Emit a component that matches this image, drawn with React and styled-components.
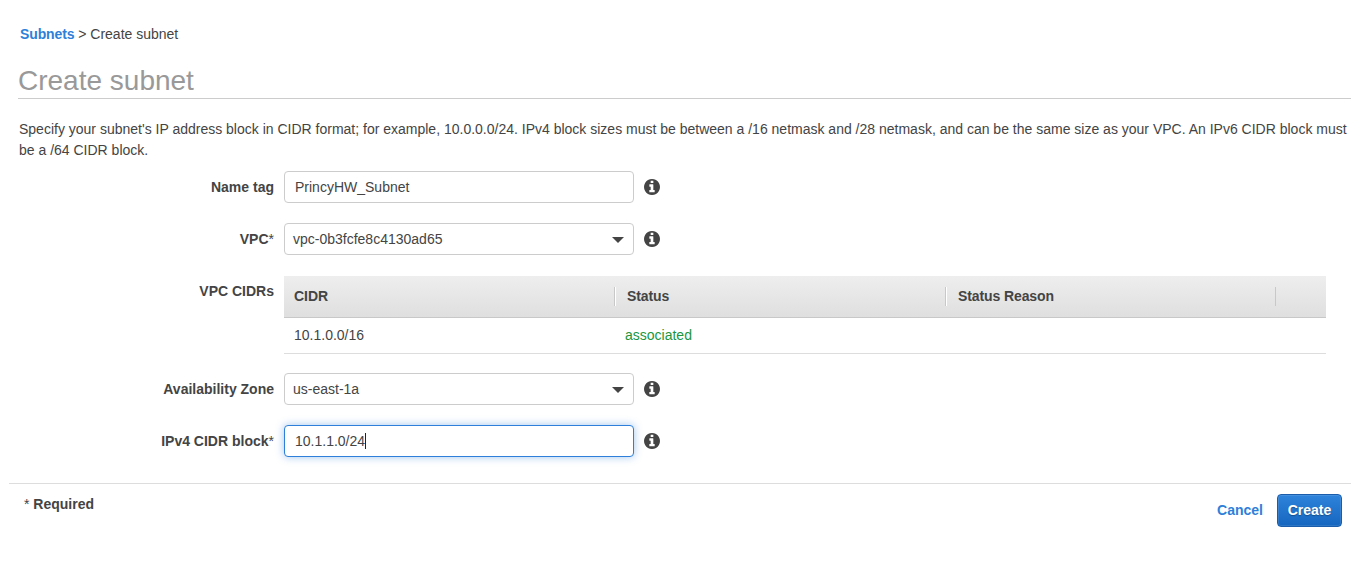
import React from "react";
import styled, { createGlobalStyle, css } from "styled-components";

const GlobalStyle = createGlobalStyle`
  *, *::before, *::after { box-sizing: border-box; }
  body {
    margin: 0;
    background: #fff;
    color: #444;
    font: 14px/20px "Liberation Sans", Arial, Helvetica, sans-serif;
  }
`;

const Page = styled.main`
  display: flex;
  flex-direction: column;
  height: 572px;
  padding: 24px 5px 0 9px;
`;

const Breadcrumb = styled.nav`
  padding-left: 11px;
  height: 20px;
`;

const Link = styled.a`
  color: #2e7fd9;
  font-weight: bold;
  letter-spacing: ${(p) => (p.$tight ? "-0.13px" : "normal")};
  text-decoration: none;
  cursor: pointer;
`;

const Title = styled.h1`
  margin: 20px 0 0 9px;
  height: 35px;
  border-bottom: 1px solid #ccc;
  color: #999;
  font-size: 28px;
  font-weight: normal;
  line-height: 33px;
`;

const Description = styled.p`
  margin: 20px 0 0 10px;
  line-height: 21px;
`;

const Form = styled.form`
  display: flex;
  flex-direction: column;
  gap: 20px;
  margin-top: 10px;
`;

const Row = styled.div`
  display: flex;
  align-items: flex-start;
`;

const ZoneRow = styled(Row)`
  margin-top: -1px;
`;

const Label = styled.label`
  width: 265px;
  margin-right: 10px;
  padding-top: 6px;
  font-weight: bold;
  text-align: right;
`;

const Mark = styled.span`
  font-weight: normal;
`;

const Field = styled.div`
  display: flex;
  align-items: center;
  width: 350px;
  height: 32px;
  padding: 0 10px;
  border: 1px solid #ccc;
  border-radius: 4px;
  background: #fff;
  ${(p) =>
    p.$focused &&
    css`
      border-color: #2e7fd9;
      box-shadow: 0 0 8px rgba(46, 127, 217, 0.45);
    `}
`;

const Select = styled(Field)`
  justify-content: space-between;
  padding: 0 9px 0 8px;
`;

const Arrow = styled.span`
  margin-top: 2px;
  border: 6px solid transparent;
  border-top-color: #444;
  border-bottom: 0;
`;

const Caret = styled.span`
  width: 1px;
  height: 16px;
  background: #222;
`;

const InfoIcon = styled.svg`
  flex: none;
  width: 16px;
  height: 16px;
  margin: 8px 0 0 10px;
  fill: #444;
`;

const Table = styled.div`
  width: 1042px;
  margin-top: 1px;
`;

const TableRow = styled.div`
  display: grid;
  grid-template-columns: 331px 331px 330px 50px;
  align-items: center;
  height: 36px;
  padding-bottom: 1px;
  border-bottom: 1px solid #ddd;
`;

const TableHead = styled(TableRow)`
  height: 42px;
  padding-bottom: 0;
  border-bottom-color: #c8c8c8;
  background: linear-gradient(#eee, #dfdfdf);
  font-weight: bold;
`;

const HeadCell = styled.div`
  height: 19px;
  padding-left: ${(p) => (p.$first ? 10 : 11)}px;
  border-right: ${(p) => (p.$last ? "0" : "1px solid #c8c8c8")};
  border-left: ${(p) => (p.$first || p.$last ? "0" : "1px solid #fff")};
  letter-spacing: ${(p) => (p.$first ? "normal" : "-0.1px")};
  line-height: 19px;
`;

const Cell = styled.div`
  height: 20px;
  margin-top: -1px;
  padding-left: 10px;
  color: ${(p) => (p.$ok ? "#1a9641" : "inherit")};
`;

const Footer = styled.footer`
  display: flex;
  justify-content: space-between;
  margin-top: 26px;
  padding: 10px 9px 0 15px;
  border-top: 1px solid #ddd;
`;

const Required = styled.strong`
  height: 20px;
`;

const Actions = styled.div`
  display: flex;
  align-items: flex-start;
  gap: 14px;
  line-height: 32px;
`;

const CreateButton = styled.button`
  width: 65px;
  height: 33px;
  padding: 0 0 1px;
  border: 1px solid #1b5dab;
  border-radius: 4px;
  background: linear-gradient(#2f83db, #1566be);
  box-shadow: inset 0 0 0 1px rgba(255, 255, 255, 0.1);
  color: #fff;
  font: bold 14px/20px "Liberation Sans", Arial, sans-serif;
  text-shadow: 0 1px 1px rgba(0, 0, 0, 0.3);
`;

function Info() {
  return (
    <InfoIcon viewBox="0 128 1536 1536" aria-hidden="true">
      <path d="M1024 1376v-160q0-14-9-23t-23-9h-96v-512q0-14-9-23t-23-9h-320q-14 0-23 9t-9 23v160q0 14 9 23t23 9h96v320h-96q-14 0-23 9t-9 23v160q0 14 9 23t23 9h448q14 0 23-9t9-23zm-128-896v-160q0-14-9-23t-23-9h-192q-14 0-23 9t-9 23v160q0 14 9 23t23 9h192q14 0 23-9t9-23zm640 416q0 209-103 385.5t-279.5 279.5-385.5 103-385.5-103-279.5-279.5-103-385.5 103-385.5 279.5-279.5 385.5-103 385.5 103 279.5 279.5 103 385.5z" />
    </InfoIcon>
  );
}

export default function App() {
  return (
    <>
      <GlobalStyle />
      <Page>
        <Breadcrumb>
          <Link $tight>Subnets</Link> &gt; Create subnet
        </Breadcrumb>
        <Title>Create subnet</Title>
        <Description>
          Specify your subnet's IP address block in CIDR format; for example, 10.0.0.0/24. IPv4 block
          sizes must be between a /16 netmask and /28 netmask, and can be the same size as your VPC. An
          IPv6 CIDR block must be a /64 CIDR block.
        </Description>
        <Form>
          <Row>
            <Label>Name tag</Label>
            <Field>PrincyHW_Subnet</Field>
            <Info />
          </Row>
          <Row>
            <Label>VPC<Mark>*</Mark></Label>
            <Select>vpc-0b3fcfe8c4130ad65<Arrow /></Select>
            <Info />
          </Row>
          <Row>
            <Label>VPC CIDRs</Label>
            <Table>
              <TableHead>
                <HeadCell $first>CIDR</HeadCell>
                <HeadCell>Status</HeadCell>
                <HeadCell>Status Reason</HeadCell>
                <HeadCell $last />
              </TableHead>
              <TableRow>
                <Cell>10.1.0.0/16</Cell>
                <Cell $ok>associated</Cell>
              </TableRow>
            </Table>
          </Row>
          <ZoneRow>
            <Label>Availability Zone</Label>
            <Select>us-east-1a<Arrow /></Select>
            <Info />
          </ZoneRow>
          <Row>
            <Label>IPv4 CIDR block<Mark>*</Mark></Label>
            <Field $focused>10.1.1.0/24<Caret /></Field>
            <Info />
          </Row>
        </Form>
        <Footer>
          <Required><Mark>*</Mark> Required</Required>
          <Actions>
            <Link>Cancel</Link>
            <CreateButton type="button">Create</CreateButton>
          </Actions>
        </Footer>
      </Page>
    </>
  );
}
